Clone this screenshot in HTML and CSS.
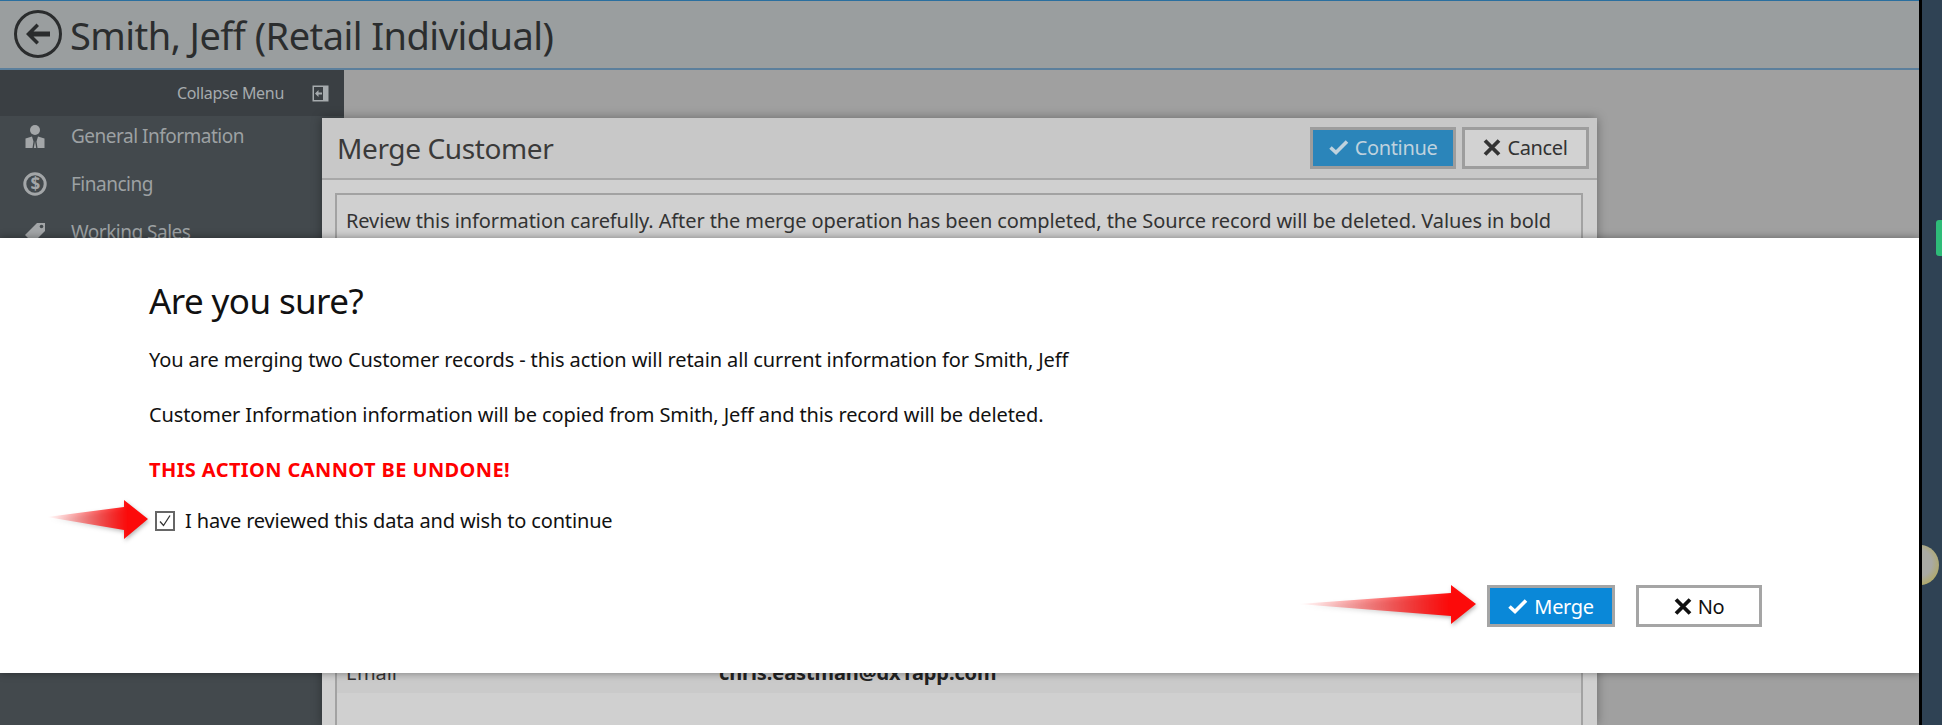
FILE: index.html
```html
<!DOCTYPE html>
<html lang="en">
<head>
<meta charset="utf-8">
<title>Merge Customer</title>
<link rel="stylesheet" href="styles.css">
</head>
<body>
<div class="page">
  <div class="app">
    <header class="topbar">
      <svg class="back" width="50" height="50" viewBox="0 0 50 50"><circle cx="25" cy="25" r="22.5" fill="none" stroke="#2a2c2d" stroke-width="3"/><path d="M13 25L23.500 14.500L26 17L20.500 22.500H37V27.500H20.500L26 33L23.500 35.500Z" fill="#2a2c2d"/></svg>
      <h1 class="title">Smith, Jeff (Retail Individual)</h1>
    </header>
    <div class="workspace">
      <nav class="sidebar">
        <div class="collapse">
          <span>Collapse Menu</span>
          <svg class="collapse-icon" width="17" height="17" viewBox="0 0 17 17"><rect x=".5" y=".5" width="16" height="16" fill="#a6abae"/><rect x="2" y="2" width="9" height="13" fill="#3a3f43"/><path d="M3 8.500L6.500 5V7.500H10V9.500H6.500V12Z" fill="#a6abae"/></svg>
        </div>
        <ul class="menu">
          <li class="menu-item">
            <svg width="24" height="24" viewBox="0 0 24 24"><circle cx="12" cy="6" r="5" fill="#a3a6a8"/><path d="M2.500 24V14.500L9 12.500L10.500 17.500L9.500 24ZM21.500 24V14.500L15 12.500L13.500 17.500L14.500 24Z" fill="#a3a6a8"/><path d="M10.800 24L12 17L13.200 24Z" fill="#a3a6a8"/></svg>
            <span>General Information</span>
          </li>
          <li class="menu-item">
            <svg width="24" height="24" viewBox="0 0 24 24"><circle cx="12" cy="12" r="10.200" fill="none" stroke="#a3a6a8" stroke-width="3"/><text x="12" y="18" text-anchor="middle" class="dollar">$</text></svg>
            <span>Financing</span>
          </li>
          <li class="menu-item">
            <svg width="24" height="24" viewBox="0 0 24 24"><path d="M2 15L14 3H22V11L10 23Z" fill="#a3a6a8"/><circle cx="18.500" cy="6.500" r="1.800" fill="#43494d"/></svg>
            <span>Working Sales</span>
          </li>
        </ul>
      </nav>
      <main class="stage"></main>
    </div>

    <section class="dialog">
      <div class="dialog-head">
        <h2 class="dialog-title">Merge Customer</h2>
        <div class="dialog-actions">
          <button class="btn btn-continue"><svg width="20" height="15" viewBox="0 0 20 15"><path d="M1.500 7.500L7 12.500L18 1.500" fill="none" stroke="currentColor" stroke-width="3.600"/></svg><span>Continue</span></button>
          <button class="btn btn-cancel"><svg width="18" height="17" viewBox="0 0 18 17"><path d="M2 1.500L16 15.500M16 1.500L2 15.500" fill="none" stroke="currentColor" stroke-width="3.800"/></svg><span>Cancel</span></button>
        </div>
      </div>
      <div class="review">
        <p class="review-note">Review this information carefully. After the merge operation has been completed, the Source record will be deleted. Values in bold</p>
        <div class="review-row"><span class="review-label">Email</span><strong class="review-value">chris.eastman@dx1app.com</strong></div>
      </div>
    </section>

    <section class="confirm">
      <h2 class="confirm-title">Are you sure?</h2>
      <p class="confirm-line">You are merging two Customer records - this action will retain all current information for Smith, Jeff</p>
      <p class="confirm-line gap">Customer Information information will be copied from Smith, Jeff and this record will be deleted.</p>
      <p class="confirm-line gap warn">THIS ACTION CANNOT BE UNDONE!</p>
      <label class="check-row">
        <span class="checkbox"><svg width="16" height="16" viewBox="0 0 16 16"><path d="M3 8.500L6.500 12.500L13 2.500" fill="none" stroke="#333" stroke-width="1.300"/></svg></span>
        I have reviewed this data and wish to continue
      </label>
      <div class="confirm-actions">
        <button class="btn btn-merge"><svg width="20" height="15" viewBox="0 0 20 15"><path d="M1.500 7.500L7 12.500L18 1.500" fill="none" stroke="currentColor" stroke-width="3.600"/></svg><span>Merge</span></button>
        <button class="btn btn-no"><svg width="18" height="17" viewBox="0 0 18 17"><path d="M2 1.500L16 15.500M16 1.500L2 15.500" fill="none" stroke="currentColor" stroke-width="3.800"/></svg><span>No</span></button>
      </div>
    </section>

    <svg class="arrow arrow-check" width="102" height="40" viewBox="0 0 102 40"><defs><linearGradient id="fadeA"><stop offset="0" stop-color="#f00" stop-opacity="0"/><stop offset=".8" stop-color="#f00" stop-opacity=".95"/></linearGradient></defs><path d="M0 17L77 7V0L101 19L77 39V30Z" fill="url(#fadeA)"/></svg>
    <svg class="arrow arrow-merge" width="179" height="40" viewBox="0 0 179 40"><defs><linearGradient id="fadeB"><stop offset="0" stop-color="#f00" stop-opacity="0"/><stop offset=".85" stop-color="#f00" stop-opacity=".95"/></linearGradient></defs><path d="M0 19L153 8V0L178 19L153 39V31Z" fill="url(#fadeB)"/></svg>
  </div>
  <aside class="rail">
    <span class="rail-tab"></span>
    <span class="rail-bubble"></span>
  </aside>
</div>
</body>
</html>
```

FILE: styles.css
```css
* { box-sizing: border-box; }
html, body { margin: 0; height: 100%; overflow: hidden; }
body { font-family: "Noto Sans", "Open Sans", sans-serif; background: #2f4254; }
h1, h2, p, ul { margin: 0; padding: 0; font-weight: 400; }
ul { list-style: none; }

.page { display: flex; width: 1942px; height: 725px; overflow: hidden; }
.app { position: relative; width: 1919px; flex: none; display: flex; flex-direction: column; background: #a0a0a0; overflow: hidden; }

.topbar { height: 70px; flex: none; display: flex; align-items: center; gap: 7px; padding: 0 0 2px 13px; background: #9a9e9f; border-top: 1px solid #2a6f9f; border-bottom: 2px solid #5b7f9c; }
.back { flex: none; }
.title { font-size: 38px; line-height: 54px; color: #2b2d2e; white-space: nowrap; letter-spacing: -.55px; padding-top: 3px; }

.workspace { flex: 1; display: flex; min-height: 0; }
.sidebar { width: 344px; flex: none; display: flex; flex-direction: column; background: #43494d; }
.collapse { height: 46px; flex: none; display: flex; align-items: center; justify-content: flex-end; gap: 28px; padding-right: 15px; background: #3a3f43; color: #a6abae; font-size: 16px; letter-spacing: -.3px; }
.menu { margin-top: -4px; }
.menu-item { display: flex; align-items: center; gap: 24px; height: 48px; padding-left: 23px; color: #9da1a3; font-size: 19px; letter-spacing: -.5px; }
.menu-item svg { flex: none; }
.dollar { font: 700 17px "Noto Sans", sans-serif; fill: #a3a6a8; }
.stage { flex: 1; background: #a0a0a0; }

.dialog { position: absolute; left: 322px; top: 118px; width: 1275px; bottom: 0; background: #d0d0d0; box-shadow: 0 0 10px rgba(0,0,0,.35); }
.dialog-head { height: 62px; display: flex; align-items: center; justify-content: space-between; padding: 0 8px 0 15px; background: #c8c8c8; border-bottom: 2px solid #a8a8a8; }
.dialog-title { font-size: 28px; line-height: 40px; color: #3a3a3a; letter-spacing: -.38px; }
.dialog-actions { display: flex; gap: 6px; margin-top: -1px; }

.btn { display: flex; align-items: center; justify-content: center; gap: 6px; height: 42px; padding: 0; border: 3px solid #a5a5a5; font: 400 20px/28px "Noto Sans", sans-serif; letter-spacing: -.35px; }
.btn span { padding-top: 1px; }
.btn-continue { width: 146px; background: #2b85ba; border-color: #9d9d9d; color: #bfd2de; }
.btn-cancel { width: 127px; background: #d2d2d2; border-color: #9d9d9d; color: #333; }
.btn-merge { width: 128px; background: #0a88d8; color: #fff; }
.btn-no { width: 126px; background: #fff; color: #111; }

.review { margin: 13px 14px 0 13px; height: 100%; border: 2px solid #a2a2a2; }
.review-note { height: 464px; padding: 12px 9px 0; font-size: 20px; line-height: 28px; color: #333; white-space: nowrap; letter-spacing: -.1px; }
.review-row { display: flex; height: 34px; background: #cacaca; font-size: 20px; line-height: 28px; color: #333; letter-spacing: -.1px; }
.review-label { width: 382px; padding-left: 9px; }
.review-value { font-weight: 700; color: #222; }

.confirm { position: absolute; left: 0; right: 0; top: 238px; height: 435px; padding: 38px 157px 0 149px; background: #fff; box-shadow: 0 0 8px rgba(0,0,0,.4); color: #111; }
.confirm-title { font-size: 35px; line-height: 50px; color: #111; letter-spacing: -.6px; }
.confirm-line { margin-top: 20px; font-size: 20px; line-height: 28px; letter-spacing: -.11px; }
.confirm-line.gap { margin-top: 27px; }
.warn { color: #f00; font-weight: 700; letter-spacing: .4px; }
.check-row { display: flex; align-items: center; gap: 10px; margin-top: 23px; padding-left: 6px; font-size: 20px; line-height: 28px; letter-spacing: -.15px; }
.checkbox { display: flex; width: 20px; height: 20px; flex: none; border: 2px solid #666; background: #fff; }
.confirm-actions { display: flex; justify-content: flex-end; gap: 21px; margin-top: 50px; }

.arrow { position: absolute; filter: drop-shadow(1px 2px 2px rgba(0,0,0,.3)); }
.arrow-check { left: 47px; top: 500px; }
.arrow-merge { left: 1298px; top: 585px; }

.rail { position: relative; flex: 1; overflow: hidden; background: #2f4254; border-left: 3px solid #000; }
.rail-tab { position: absolute; right: 0; top: 220px; width: 6px; height: 36px; border-radius: 3px 0 0 3px; background: #2ebb78; }
.rail-bubble { position: absolute; left: -21px; top: 545px; width: 38px; height: 40px; border-radius: 50%; background: radial-gradient(circle at 45% 45%, #a9aaa4 0 45%, #b0a968 75%, #b8a850 100%); }
```
